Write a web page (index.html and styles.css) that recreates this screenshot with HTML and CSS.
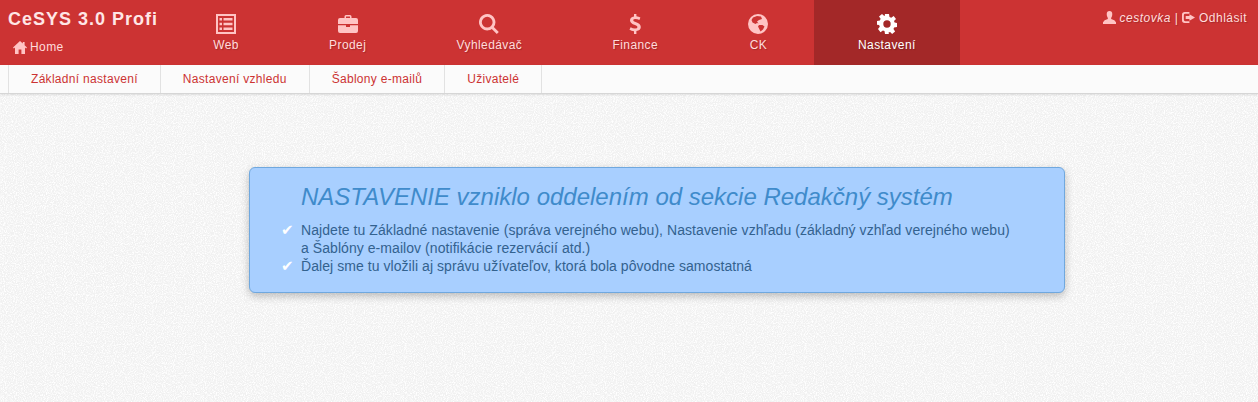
FILE: index.html
```html
<!DOCTYPE html>
<html>

<head>
	<title>CeSYS 3.0 Profi - Nastavení</title>
	<link rel="stylesheet" href="styles.css">
</head>

<body>
	<header class="topbar">
		<div class="brand">
			<a class="brand-name">CeSYS 3.0 Profi</a>
			<a class="brand-home">
				<svg class="icon-home" viewBox="0 0 14 13"><path d="M7 0L0 6.6l.9.9L2 6.5V13h3.6V8.600h2.800V13H12V6.500l1.100 1 .9-.9L11.600 4.300V1H9.800v1.600z"/></svg>Home
			</a>
		</div>
		<nav class="mainnav">
			<a class="mainnav-item">
				<svg class="mainnav-icon" viewBox="0 0 20 20"><path fill-rule="evenodd" d="M0 0h20v20H0zM2 2v16h16V2zM3.500 4h2.500v2.500H3.500zM7.500 4h9v2.500h-9zM3.500 8.800h2.500v2.500H3.500zM7.500 8.800h9v2.500h-9zM3.500 13.500h2.500V16H3.500zM7.500 13.500h9V16h-9z"/></svg>
				Web
			</a>
			<a class="mainnav-item">
				<svg class="mainnav-icon" viewBox="0 0 20 20"><path fill-rule="evenodd" d="M6.500 4V2.500Q6.500 1 8 1h4q1.500 0 1.500 1.500V4H18q2 0 2 2v4H0V6q0-2 2-2zM8 4h4V2.500H8zM0 11.200h8V13h4v-1.800h8V17q0 2-2 2H2q-2 0-2-2z"/></svg>
				Prodej
			</a>
			<a class="mainnav-item">
				<svg class="mainnav-icon" viewBox="0 0 20 20"><path fill-rule="evenodd" d="M8.200 0a8.200 8.200 0 0 1 6.600 13l5 5-2 2-5-5A8.200 8.200 0 1 1 8.200 0zm0 2.800a5.400 5.400 0 1 0 0 10.800 5.400 5.400 0 0 0 0-10.800z"/></svg>
				Vyhledávač
			</a>
			<a class="mainnav-item">
				<svg class="mainnav-icon" viewBox="0 0 20 20"><path d="M9 0h2.400v2.300q2.300.2 4 1.200l-1 2.500q-2-1.100-4-1.100-2.200 0-2.200 1.400 0 1.100 2.400 1.800 5.200 1.500 5.200 5 0 3.400-4.400 4V20H9v-2.800q-2.700-.2-4.500-1.500l1.100-2.500q2.200 1.400 4.400 1.400 2.500 0 2.500-1.500 0-1.200-2.500-2-5-1.500-5-4.800 0-3.300 4-3.900z"/></svg>
				Finance
			</a>
			<a class="mainnav-item">
				<svg class="mainnav-icon" viewBox="0 0 20 20"><path fill-rule="evenodd" d="M10 0a10 10 0 1 1 0 20 10 10 0 0 1 0-20zM5 3.500L3.500 6l1 2.500 3 1.500 1.500-1 1.500.5L9 7.500 11 6 14 5l-1-2.500L9 2zM11 11l-1 1.500 1.500 3 1 2 2.500-2 1.500-3-2-1.500z"/></svg>
				CK
			</a>
			<a class="mainnav-item active">
				<svg class="mainnav-icon" viewBox="0 0 20 20"><path fill-rule="evenodd" d="M8 0h4l.5 3 1.700.7L16.700 2 19 5l-2 2 .6 1.600 2.400.4v4l-2.900.5-.6 1.500 1.600 2.500-3 2.400-2-1.900-1.600.6L11.900 20H8l-.5-2.900-1.600-.6-2.400 1.700L1 15l1.800-2.300-.7-1.700L0 10.700V7l2.900-.5.700-1.700L2 2.500 5 0l2.300 2 .3-.1zM10 6.300a3.700 3.700 0 1 0 0 7.400 3.700 3.700 0 0 0 0-7.400z"/></svg>
				Nastavení
			</a>
		</nav>
		<div class="userbox">
			<svg class="icon-small" viewBox="0 0 14 14"><path d="M7 0q3 0 3 3.500Q10 6 8.800 7.500v1.200Q13 10 14 12v2H0v-2q1-2 5.200-3.300V7.500Q4 6 4 3.500 4 0 7 0z"/></svg>
			<em>cestovka</em> |
			<svg class="icon-small" viewBox="0 0 14 14"><path fill-rule="evenodd" d="M3 1h5v2H3.500Q2 3 2 4.500v5Q2 11 3.500 11H8v2H3Q0 13 0 10V4q0-3 3-3zM8 3.500L14 7l-6 3.500V8.500H4v-3h4z"/></svg>
			Odhlásit
		</div>
	</header>

	<nav class="subnav">
		<a>Základní nastavení</a>
		<a>Nastavení vzhledu</a>
		<a>Šablony e-mailů</a>
		<a>Uživatelé</a>
	</nav>

	<main class="infobox">
		<h1>NASTAVENIE vzniklo oddelením od sekcie Redakčný systém</h1>
		<ul>
			<li>Najdete tu Základné nastavenie (správa verejného webu), Nastavenie vzhľadu (základný vzhľad verejného webu)<br>a Šablóny e-mailov (notifikácie rezervácií atd.)</li>
			<li>Ďalej sme tu vložili aj správu užívateľov, ktorá bola pôvodne samostatná</li>
		</ul>
	</main>
</body>

</html>
```

FILE: styles.css
```css
html {
	height: 100%;
}

body {
	min-height: 100%;
	margin: 0;
	background-color: #f1f1f1;
	background-image: url("data:image/svg+xml,%3Csvg xmlns='http://www.w3.org/2000/svg' width='200' height='200'%3E%3Cfilter id='n'%3E%3CfeTurbulence type='fractalNoise' baseFrequency='0.9' numOctaves='2'/%3E%3CfeColorMatrix values='0 0 0 0 1 0 0 0 0 1 0 0 0 0 1 0 0 0 3 -1.2'/%3E%3C/filter%3E%3Crect width='200' height='200' filter='url(%23n)'/%3E%3C/svg%3E");
	font-family: "Liberation Sans", Arial, sans-serif;
	font-size: 12px;
}

.topbar {
	display: flex;
	height: 65px;
	background-color: #cc3333;
	color: #ffdcdc;
}

.brand {
	width: 168px;
	flex-shrink: 0;
}

.brand-name {
	display: block;
	margin: 8px 0 0 8px;
	font-size: 18px;
	font-weight: bold;
	line-height: 22px;
	letter-spacing: 1px;
	color: #ffe6e6;
}

.brand-home {
	display: flex;
	align-items: center;
	margin: 8px 0 0 13px;
	line-height: 18px;
	letter-spacing: 0.4px;
}

.icon-home {
	width: 14px;
	height: 13px;
	margin-right: 3px;
	fill: #ffc4c4;
}

.mainnav {
	display: flex;
}

.mainnav-item {
	display: flex;
	flex-direction: column;
	align-items: center;
	padding: 14px 45.15px 0;
	line-height: 16px;
	text-shadow: 1px 1px 1px rgba(0, 0, 0, 0.2);
	letter-spacing: 0.41px;
}

.mainnav-icon {
	width: 20px;
	height: 20px;
	margin-bottom: 3px;
	fill: #ffc4c4;
}

.mainnav-item.active {
	padding: 14px 44.5px 0;
	background-color: #a32828;
	color: white;
}

.mainnav-item.active .mainnav-icon {
	fill: white;
}

.userbox {
	margin-left: auto;
	padding: 10px 11px 0 0;
	line-height: 16px;
	letter-spacing: 0.5px;
	text-shadow: 1px 1px 1px rgba(0, 0, 0, 0.2);
}

.icon-small {
	width: 13px;
	height: 13px;
	vertical-align: -2px;
	fill: #ffc4c4;
}

.subnav {
	display: flex;
	height: 28px;
	padding-left: 8px;
	background-color: #fbfbfb;
	border-bottom: 1px solid #d6d6d6;
	box-shadow: 0 1px 2px rgba(0, 0, 0, 0.1);
}

.subnav a {
	padding: 0 22px;
	border-left: 1px solid #e2e2e2;
	line-height: 29px;
	color: #cc3333;
	letter-spacing: 0.3px;
}

.subnav a:last-child {
	border-right: 1px solid #e2e2e2;
}

.infobox {
	box-sizing: border-box;
	width: 816px;
	height: 126px;
	margin: 73px 0 0 249px;
	padding: 14px 0 0 51px;
	background-color: #a8cfff;
	border: 1px solid #70a8de;
	border-radius: 6px;
	box-shadow: 0 3px 8px rgba(0, 0, 0, 0.25);
	color: #33628f;
}

.infobox h1 {
	margin: 0 0 10px;
	font-size: 24px;
	font-weight: normal;
	font-style: italic;
	line-height: 29px;
	color: #3f8bcb;
}

.infobox ul {
	margin: 0;
	padding: 0;
	list-style: none;
}

.infobox li {
	position: relative;
	font-size: 14px;
	letter-spacing: 0.06px;
	line-height: 18px;
}

.infobox li::before {
	content: "✔";
	position: absolute;
	left: -20px;
	font-family: "DejaVu Sans", sans-serif;
	font-size: 15px;
	color: white;
}
```
